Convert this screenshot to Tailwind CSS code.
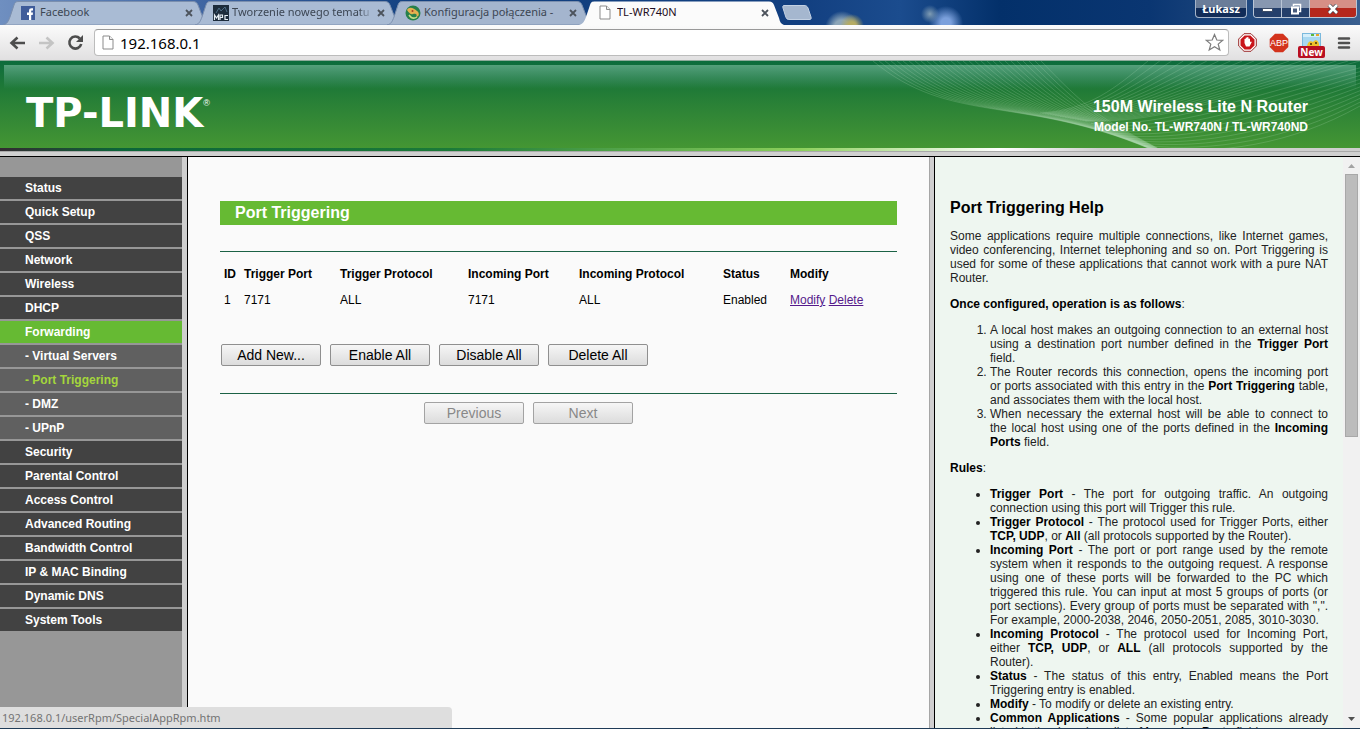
<!DOCTYPE html>
<html lang="en">
<head>
<meta charset="utf-8">
<title>TL-WR740N</title>
<script src="https://cdn.jsdelivr.net/npm/@tailwindcss/browser@4"></script>
</head>
<body class="flex h-screen flex-col overflow-hidden bg-[#fafafa] text-xs text-black font-['Liberation_Sans',Arial,sans-serif]">

<svg class="hidden" aria-hidden="true">
  <symbol id="tab" viewBox="0 0 205 25" preserveAspectRatio="none">
    <path d="M0 25 C4 24 5 22 7 17 L11 5 C12 2 13 1.500 16 1.500 H190 C193 1.500 194 3 195 5 L200 18 C201 22 202 24 205 25 Z"/>
  </symbol>
  <symbol id="page" viewBox="0 0 12 16">
    <path d="M1 1 H7.500 L11 4.500 V14 H1 Z" fill="#fff" stroke="#8b8b8b"/>
    <path d="M7.500 1 V4.500 H11" fill="#eee" stroke="#8b8b8b"/>
  </symbol>
  <symbol id="close" viewBox="0 0 8 8">
    <path d="M1 1 L7 7 M7 1 L1 7" fill="none" stroke="#4c535c" stroke-width="1.800"/>
  </symbol>
</svg>

<!-- window title bar with tabs -->
<div class="flex h-[25px] shrink-0 justify-between bg-[radial-gradient(circle_at_852px_26px,#b5ac63_0_4px,transparent_12px),radial-gradient(circle_at_842px_28px,#8da6b8_0_8px,transparent_17px),radial-gradient(circle_at_930px_14px,#7f9cb4_0,transparent_9px),radial-gradient(circle_at_946px_23px,#7ba0dc_0_5px,transparent_17px),linear-gradient(90deg,#6f8fc0_0,#3b62a0_220px,#12407f_420px,#123f80_800px,#1b4c8e_900px,#03306a_1000px,#0a3672_1150px,#3a5f8f_100%)] text-[11px] font-['Noto_Sans','Open_Sans',sans-serif]">
  <div class="flex pl-[3px]" role="tablist">
    <div class="relative -mr-[13px] flex w-[205px] shrink-0 items-center pr-[15px] pl-[18px] text-[#3c4653]" role="tab">
      <svg class="absolute inset-0 h-full w-full fill-[#a9bbd4] stroke-[#7b8fae]"><use href="#tab"/></svg>
      <svg class="relative mr-[5px] size-[14px] shrink-0" viewBox="0 0 14 14"><rect width="14" height="14" fill="#3f5c9a"/><path d="M8 14 V9 H6 V6.500 H8 V5 C8 3 9 2.300 10.500 2.300 H12 V4.500 H11 C10.300 4.500 10.200 4.800 10.200 5.400 V6.500 H12 L11.700 9 H10.200 V14 Z" fill="#fff"/></svg>
      <span class="relative flex-1 truncate">Facebook</span>
      <button class="relative" aria-label="Close tab"><svg class="size-2"><use href="#close"/></svg></button>
    </div>
    <div class="relative -mr-[13px] flex w-[205px] shrink-0 items-center pr-[15px] pl-[18px] text-[#3c4653]" role="tab">
      <svg class="absolute inset-0 h-full w-full fill-[#a9bbd4] stroke-[#7b8fae]"><use href="#tab"/></svg>
      <svg class="relative mr-[3px] size-4 shrink-0" viewBox="0 0 16 16"><rect width="16" height="16" fill="#1d2c3c"/><path d="M3 8 L6 3 L8 6 L12 2 L14 7" fill="none" stroke="#4e6d86"/><path d="M1.500 15 V10 L3.500 13 L5.500 10 V15 M7 15 V10 H9.500 V12.500 H7 M15 10.500 H12 V14.500 H15" fill="none" stroke="#e5edf3" stroke-width="1.200"/></svg>
      <span class="relative mr-1 flex-1 overflow-hidden whitespace-nowrap [mask-image:linear-gradient(90deg,#000_90%,transparent)]">Tworzenie nowego tematu</span>
      <button class="relative" aria-label="Close tab"><svg class="size-2"><use href="#close"/></svg></button>
    </div>
    <div class="relative -mr-[13px] flex w-[205px] shrink-0 items-center pr-[15px] pl-[18px] text-[#3c4653]" role="tab">
      <svg class="absolute inset-0 h-full w-full fill-[#a4b5ce] stroke-[#7b8fae]"><use href="#tab"/></svg>
      <svg class="relative mr-[3px] size-4 shrink-0" viewBox="0 0 16 16"><circle cx="8" cy="8" r="7.500" fill="#27804b"/><path d="M2 5 C4 1 9 3 12 6 C15 8 14 12 11 12 C13 9 10 8 8 9 C6 10 4 8 2 5 Z" fill="#e3b04f"/><path d="M4 10 C6 13 9 14 12 12" fill="none" stroke="#c5df87" stroke-width="1.500"/><circle cx="7.500" cy="6" r="1" fill="#a23d21"/></svg>
      <span class="relative mr-1 flex-1 overflow-hidden whitespace-nowrap">Konfiguracja połączenia -</span>
      <button class="relative" aria-label="Close tab"><svg class="size-2"><use href="#close"/></svg></button>
    </div>
    <div class="relative flex w-[205px] shrink-0 items-center pr-[15px] pl-[20px] text-[#1d0d22]" role="tab" aria-selected="true">
      <svg class="absolute inset-0 h-full w-full fill-[#fbfbfb]"><use href="#tab"/></svg>
      <svg class="relative mr-[6px] h-4 w-3 shrink-0"><use href="#page"/></svg>
      <span class="relative flex-1 truncate">TL-WR740N</span>
      <button class="relative" aria-label="Close tab"><svg class="size-2"><use href="#close"/></svg></button>
    </div>
    <button class="-ml-[2px] self-center" aria-label="New tab"><svg class="h-[15px] w-[30px]" viewBox="0 0 30 15"><path d="M2 .5 H22 C24 .5 25 1 26 3 L29 12 C29.500 14 29 14.500 27 14.500 H8 C5 14.500 4.500 14 3.500 11 L1 3 C.5 1 1 .5 2 .5Z" fill="#a5b7cf" stroke="#c3d1e3"/></svg></button>
  </div>
  <div class="flex items-start gap-[6px] pr-[3px]">
    <button class="h-[18px] w-[52px] rounded-b-sm border border-t-0 border-[#a5b4c9] bg-linear-to-b from-[#6a7d99] from-45% to-[#112c58] to-50% text-[11px] leading-4 font-bold text-white">Łukasz</button>
    <div class="flex h-[18px] w-[104px] overflow-hidden rounded-b-sm border border-t-0 border-[#b9c5d6]">
      <button class="flex flex-1 items-end justify-center border-r border-[#b9c5d6] bg-linear-to-b from-[#8797b0] from-45% to-[#243f6b] to-50% pb-[5px]" aria-label="Minimize"><span class="h-1 w-[11px] border border-[#3b4b66] bg-white"></span></button>
      <button class="flex flex-1 items-center justify-center border-r border-[#b9c5d6] bg-linear-to-b from-[#8797b0] from-45% to-[#243f6b] to-50%" aria-label="Restore"><svg class="size-3" viewBox="0 0 12 12"><path d="M3.500 3 V1.500 H10.500 V8.500 H9" fill="none" stroke="#fff" stroke-width="1.500"/><path d="M2 4.500 H8 V10.500 H2 Z" fill="#485b7c" stroke="#fff" stroke-width="2"/></svg></button>
      <button class="flex w-[46px] items-center justify-center bg-linear-to-b from-[#d68f86] from-45% to-[#b5271c] to-50%" aria-label="Close"><svg class="h-[10px] w-3" viewBox="0 0 12 10"><path d="M2 1 L10 9 M10 1 L2 9" stroke="#43454f" stroke-width="4"/><path d="M2 1 L10 9 M10 1 L2 9" stroke="#fff" stroke-width="2.600"/></svg></button>
    </div>
  </div>
</div>

<!-- browser toolbar -->
<div class="flex h-9 shrink-0 items-center border-b border-[#8fab9b] bg-linear-to-b from-[#fbfbfb] to-[#e1e0e1] pr-[9px] pl-[9px]">
  <button class="mr-3" aria-label="Back"><svg class="h-4 w-[17px]" viewBox="0 0 17 16"><path d="M16 8 H3 M8.500 2.500 L2.500 8 L8.500 13.500" fill="none" stroke="#4d4d4d" stroke-width="2.600"/></svg></button>
  <button class="mr-3" aria-label="Forward"><svg class="h-4 w-[17px]" viewBox="0 0 17 16"><path d="M1 8 H14 M8.500 2.500 L14.500 8 L8.500 13.500" fill="none" stroke="#c4c4c4" stroke-width="2.600"/></svg></button>
  <button class="mr-[10px]" aria-label="Reload"><svg class="size-[17px]" viewBox="0 0 17 17"><path d="M12.800 4.500 A6 6 0 1 0 14.200 10" fill="none" stroke="#4d4d4d" stroke-width="2.600"/><path d="M16 1 V8 H9 Z" fill="#4d4d4d"/></svg></button>
  <div class="flex h-[27px] flex-1 items-center rounded-sm border border-[#bcbcbc] border-t-[#999] bg-white px-[7px]">
    <svg class="mr-[6px] h-4 w-3 shrink-0"><use href="#page"/></svg>
    <input class="min-w-0 flex-1 bg-transparent text-[15px] leading-5 font-['Noto_Sans','Open_Sans',sans-serif] outline-none" type="text" value="192.168.0.1" aria-label="Address">
    <button aria-label="Bookmark this page"><svg class="-mr-[3px] size-[19px]" viewBox="0 0 19 19"><path d="M9.500 1.500 L11.800 7 L17.800 7.300 L13.200 11.100 L14.800 17 L9.500 13.700 L4.200 17 L5.800 11.100 L1.200 7.300 L7.200 7 Z" fill="#fff" stroke="#7d7d7d" stroke-width="1.200"/></svg></button>
  </div>
  <button class="ml-[9px]" aria-label="Ad blocker"><svg class="size-[19px]" viewBox="0 0 19 19"><path d="M6 .7 H13 L18.300 6 V13 L13 18.300 H6 L.7 13 V6 Z" fill="#fff" stroke="#9b2b2b"/><path d="M6.600 2.500 H12.400 L16.500 6.600 V12.400 L12.400 16.500 H6.600 L2.500 12.400 V6.600 Z" fill="#c9151b"/><path d="M6.500 10 V6 Q7 5.300 7.700 6 V4.800 Q8.400 4 9.100 4.800 V4.300 Q9.900 3.700 10.600 4.500 V6 Q11.400 5.200 12 6 V9 Q13.300 8 13.700 9.300 L11.500 13.500 H8 Z" fill="#fff"/></svg></button>
  <button class="ml-3" aria-label="Adblock Plus"><svg class="size-5" viewBox="0 0 20 20"><path d="M6 .7 H14 L19.300 6 V14 L14 19.300 H6 L.7 14 V6 Z" fill="#d3331c"/><text x="10" y="13" text-anchor="middle" fill="#fff" font-family="Liberation Sans" font-size="9">ABP</text></svg></button>
  <button class="relative ml-[9px] h-[27px] w-[27px] self-start" aria-label="Extension"><svg class="mx-auto mt-2 block size-[19px]" viewBox="0 0 19 19"><rect x=".5" y=".5" width="18" height="18" fill="#a9d8f1" stroke="#7bb9dd"/><rect x="1" y="1" width="17" height="3" fill="#d5eefa"/><rect x="9" y="1" width="3" height="2" fill="#5cb83e"/><rect x="14" y="1" width="3" height="2" fill="#e9a52b"/><path d="M5 15 C5 9 8 7 11 9 C14 5 18 8 17 15 Z" fill="#f0c02b"/><circle cx="9" cy="11" r="1" fill="#40310b"/><circle cx="14" cy="10" r="1" fill="#40310b"/></svg><span class="absolute top-[21px] left-0 h-3 w-[27px] rounded-xs bg-[#b90f22] text-[10px] leading-3 font-bold text-white font-['Noto_Sans',sans-serif]">New</span></button>
  <button class="ml-3" aria-label="Menu"><svg class="h-[14px] w-[14px]" viewBox="0 0 14 14"><path d="M2 2.500 H12 M2 7 H12 M2 11.500 H12" stroke="#505050" stroke-width="2.500" stroke-linecap="round"/></svg></button>
</div>

<!-- router banner -->
<header class="relative flex h-[87px] shrink-0 items-center justify-between bg-linear-to-b from-[#0c6c3c] via-[#1e7937] via-30% to-[#449633] pr-[52px] pl-[26px] text-white">
  <div class="absolute top-1 right-1 left-1 h-6 bg-linear-to-b from-[#55a07b] to-transparent"></div>
  <svg class="absolute top-0 right-0 h-[87px] w-[500px]" viewBox="860 61 500 87" fill="none" stroke="#c5e6c6" stroke-opacity=".25" stroke-width=".8" id="waves"></svg>
  <div class="relative flex pt-4">
    <span class="text-[40px] leading-10 font-bold font-['DejaVu_Sans',sans-serif]">TP-LINK</span>
    <span class="mt-1 text-[9px] leading-3">®</span>
  </div>
  <div class="relative pt-6 text-right font-bold">
    <p class="text-base leading-5">150M Wireless Lite N Router</p>
    <p class="leading-5">Model No. TL-WR740N / TL-WR740ND</p>
  </div>
</header>
<div class="h-9px h-[9px] shrink-0 border-b border-black bg-[#d0d0d0]">
  <div class="h-[3px] [background-image:linear-gradient(90deg,#332b31_0,#0b6539_120px,#1b7a38_450px,#8cd05c_800px,#fff_1000px,#cfcfcf_1100px)]"></div>
  <div class="h-px bg-[#a9a9a9]"></div>
</div>

<div class="flex min-h-0 flex-1">
  <!-- menu -->
  <nav class="w-[188px] shrink-0 border-r border-black bg-[#cfcfcf] pr-[5px]">
    <ul class="flex h-full flex-col gap-[2px] bg-[#979797] pt-5 leading-[22px] font-bold text-white">
      <li class="bg-[#424242] pl-[25px]"><a href="#">Status</a></li>
      <li class="bg-[#424242] pl-[25px]"><a href="#">Quick Setup</a></li>
      <li class="bg-[#424242] pl-[25px]"><a href="#">QSS</a></li>
      <li class="bg-[#424242] pl-[25px]"><a href="#">Network</a></li>
      <li class="bg-[#424242] pl-[25px]"><a href="#">Wireless</a></li>
      <li class="bg-[#424242] pl-[25px]"><a href="#">DHCP</a></li>
      <li class="bg-[#66ba33] pl-[25px]"><a href="#">Forwarding</a></li>
      <li class="bg-[#606060] pl-[25px]"><a href="#">- Virtual Servers</a></li>
      <li class="bg-[#606060] pl-[25px] text-[#a4d63c]"><a href="#">- Port Triggering</a></li>
      <li class="bg-[#606060] pl-[25px]"><a href="#">- DMZ</a></li>
      <li class="bg-[#606060] pl-[25px]"><a href="#">- UPnP</a></li>
      <li class="bg-[#424242] pl-[25px]"><a href="#">Security</a></li>
      <li class="bg-[#424242] pl-[25px]"><a href="#">Parental Control</a></li>
      <li class="bg-[#424242] pl-[25px]"><a href="#">Access Control</a></li>
      <li class="bg-[#424242] pl-[25px]"><a href="#">Advanced Routing</a></li>
      <li class="bg-[#424242] pl-[25px]"><a href="#">Bandwidth Control</a></li>
      <li class="bg-[#424242] pl-[25px]"><a href="#">IP &amp; MAC Binding</a></li>
      <li class="bg-[#424242] pl-[25px]"><a href="#">Dynamic DNS</a></li>
      <li class="bg-[#424242] pl-[25px]"><a href="#">System Tools</a></li>
    </ul>
  </nav>

  <!-- settings form -->
  <main class="min-w-0 flex-1 px-8 pt-11">
    <h1 class="mb-[26px] h-6 bg-[#66ba33] pl-[15px] text-base leading-6 font-bold text-white">Port Triggering</h1>
    <hr class="border-[#1b6245]">
    <table class="mt-[9px] w-full table-fixed text-left">
      <colgroup><col class="w-[24px]"><col class="w-[96px]"><col class="w-[128px]"><col class="w-[111px]"><col class="w-[144px]"><col class="w-[67px]"><col></colgroup>
      <thead><tr class="h-[26px]"><th class="pl-1">ID</th><th>Trigger Port</th><th>Trigger Protocol</th><th>Incoming Port</th><th>Incoming Protocol</th><th>Status</th><th>Modify</th></tr></thead>
      <tbody><tr class="h-[26px]"><td class="pl-1">1</td><td>7171</td><td>ALL</td><td>7171</td><td>ALL</td><td>Enabled</td><td><a href="#" class="text-[#551a8b] underline">Modify</a> <a href="#" class="text-[#551a8b] underline">Delete</a></td></tr></tbody>
    </table>
    <div class="mt-[31px] mb-[27px] flex gap-[9px] pl-px text-sm">
      <button class="h-[22px] w-[100px] rounded-xs border border-[#8f8f8f] bg-linear-to-b from-[#f6f6f6] to-[#dcdcdc] leading-5">Add New...</button>
      <button class="h-[22px] w-[100px] rounded-xs border border-[#8f8f8f] bg-linear-to-b from-[#f6f6f6] to-[#dcdcdc] leading-5">Enable All</button>
      <button class="h-[22px] w-[100px] rounded-xs border border-[#8f8f8f] bg-linear-to-b from-[#f6f6f6] to-[#dcdcdc] leading-5">Disable All</button>
      <button class="h-[22px] w-[100px] rounded-xs border border-[#8f8f8f] bg-linear-to-b from-[#f6f6f6] to-[#dcdcdc] leading-5">Delete All</button>
    </div>
    <hr class="border-[#1b6245]">
    <div class="mt-2 flex justify-center gap-[9px] pr-[60px] text-sm text-[#888]">
      <button disabled class="h-[22px] w-[100px] rounded-xs border border-[#a3a3a3] bg-linear-to-b from-[#f6f6f6] to-[#dcdcdc] leading-5">Previous</button>
      <button disabled class="h-[22px] w-[100px] rounded-xs border border-[#a3a3a3] bg-linear-to-b from-[#f6f6f6] to-[#dcdcdc] leading-5">Next</button>
    </div>
  </main>

  <!-- help -->
  <aside class="flex w-[431px] shrink-0 border-l border-[#a5a5a5] bg-[#d0cfd0] pl-1">
    <div class="flex-1 overflow-hidden border-l border-black bg-[#eef6f0] pt-[41px] pr-[15px] pl-[15px] text-justify leading-[14px] text-[#222]">
      <h2 class="mb-[11px] text-base leading-5 font-bold text-black">Port Triggering Help</h2>
      <p class="mb-3">Some applications require multiple connections, like Internet games, video conferencing, Internet telephoning and so on. Port Triggering is used for some of these applications that cannot work with a pure NAT Router.</p>
      <p class="mb-3"><b class="text-black">Once configured, operation is as follows</b>:</p>
      <ol class="mb-3 list-decimal pl-10">
        <li>A local host makes an outgoing connection to an external host using a destination port number defined in the <b class="text-black">Trigger Port</b> field.</li>
        <li>The Router records this connection, opens the incoming port <span class="whitespace-nowrap">or ports</span> associated with this entry in the <b class="text-black">Port Triggering</b> table, and associates them with the local host.</li>
        <li>When necessary the external host will be able to connect to <span class="whitespace-nowrap">the local</span> host using one of the ports defined in the <b class="text-black">Incoming</b> <span class="whitespace-nowrap"><b class="text-black">Ports</b> field.</span></li>
      </ol>
      <p class="mb-3"><b class="text-black">Rules</b>:</p>
      <ul class="list-disc pl-10">
        <li><b class="text-black">Trigger Port</b> - The port for outgoing traffic. An outgoing connection using this port will Trigger this rule.</li>
        <li><b class="text-black">Trigger Protocol</b> - The protocol used for Trigger Ports, either <b class="text-black">TCP, UDP</b>, or <b class="text-black">All</b> (all protocols supported by the Router).</li>
        <li><b class="text-black">Incoming Port</b> - The port or port range used by the remote system when it responds to the outgoing request. A response using one of these ports will be forwarded to the PC which triggered this rule. You can input at most 5 groups of ports (or port sections). Every group of ports must be separated with ",". For example, 2000-2038, 2046, 2050-2051, 2085, 3010-3030.</li>
        <li><b class="text-black">Incoming Protocol</b> - The protocol used for Incoming Port, either <b class="text-black">TCP, UDP</b>, or <b class="text-black">ALL</b> (all protocols supported by the Router).</li>
        <li><b class="text-black">Status</b> - The status of this entry, Enabled means the Port Triggering entry is enabled.</li>
        <li><b class="text-black">Modify</b> - To modify or delete an existing entry.</li>
        <li><b class="text-black">Common Applications</b> - Some popular applications already listed in the drop-down list of <b class="text-black">Incoming Ports</b> fields.</li>
      </ul>
    </div>
    <div class="flex w-[17px] shrink-0 flex-col items-center bg-[#f1f1f1]" aria-hidden="true">
      <svg class="h-[17px] w-[17px] shrink-0" viewBox="0 0 17 17"><path d="M5 11 H12 L8.500 7 Z" fill="#a3a3a3"/></svg>
      <div class="min-h-0 flex-1 self-stretch px-[2px]"><div class="h-[49%] border border-[#a8a8a8] bg-[#bcbcbc]"></div></div>
      <svg class="h-[17px] w-[17px] shrink-0" viewBox="0 0 17 17"><path d="M5 6 H12 L8.500 10 Z" fill="#505050"/></svg>
    </div>
  </aside>
</div>
<div class="h-px shrink-0 bg-[#1f3b57]"></div>

<!-- link target bubble -->
<div class="absolute bottom-px left-0 h-[21px] w-[452px] rounded-tr-sm bg-[#dedede] pl-[2px] text-[11px] leading-[22px] text-[#737373] font-['Noto_Sans','Open_Sans',sans-serif]">192.168.0.1/userRpm/SpecialAppRpm.htm</div>

<script>
  const waves = document.getElementById('waves');
  const mix = (a, b, t) => a + (b - a) * t;
  const addCurve = (p) => {
    const el = document.createElementNS('http://www.w3.org/2000/svg', 'path');
    el.setAttribute('d', `M${p[0]} ${p[1]} C${p[2]} ${p[3]} ${p[4]} ${p[5]} ${p[6]} ${p[7]}`);
    waves.appendChild(el);
  };
  const blend = (a, b, t) => a.map((v, i) => mix(v, b[i], t));
  const left = [[873, 61, 950, 125, 1020, 95, 1148, 148], [1041, 61, 1090, 112, 1100, 118, 1165, 152]];
  for (let i = 0; i <= 28; i++) addCurve(blend(left[0], left[1], i / 28));
  const start = [[1040, 113, 1090, 110, 1115, 88, 1148, 61], [1085, 121, 1160, 125, 1250, 90, 1360, 61]];
  for (let i = 0; i <= 18; i++) addCurve(blend(start[0], start[1], i / 18));
  const right = [[1085, 121, 1160, 125, 1250, 90, 1360, 64], [1150, 148, 1220, 155, 1290, 145, 1360, 106]];
  for (let i = 1; i <= 11; i++) addCurve(blend(right[0], right[1], i / 11));
</script>
</body>
</html>
